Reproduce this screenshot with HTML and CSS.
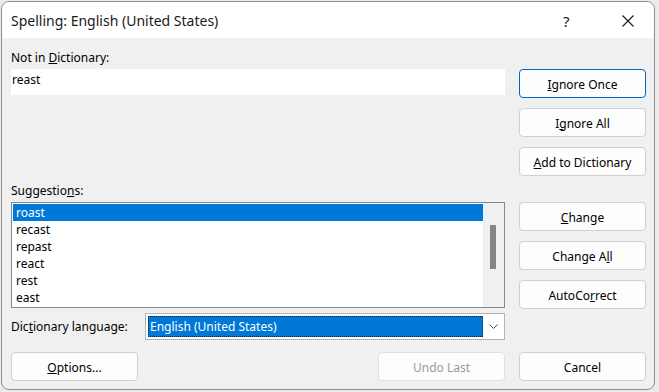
FILE: index.html
```html
<!DOCTYPE html>
<html>

<head>
  <meta charset="utf-8">
  <meta name="viewport" content="width=device-width">
  <title>Spelling: English (United States)</title>
  <link rel="stylesheet" href="styles.css">
</head>

<body>
  <div class="dialog">
    <div class="titlebar">
      <span class="title">Spelling: English (United States)</span>
      <span class="help">?</span>
      <span class="close">
        <svg width="12" height="12" viewBox="0 0 12 12">
          <path d="M0.5 0.5 L11.5 11.5 M11.5 0.5 L0.5 11.5" stroke="#1a1a1a" stroke-width="1.1" fill="none"/>
        </svg>
      </span>
    </div>

    <div class="client">
      <div class="main">
        <div class="left">
          <div class="label first">Not in <u>D</u>ictionary:</div>
          <div class="textbox">reast</div>

          <div class="label sugg">Suggestio<u>n</u>s:</div>
          <div class="listbox">
            <ul class="items">
              <li class="selected">roast</li>
              <li>recast</li>
              <li>repast</li>
              <li>react</li>
              <li>rest</li>
              <li>east</li>
            </ul>
            <div class="scrollbar"><div class="thumb"></div></div>
          </div>

          <div class="langrow">
            <span class="label">Dic<u>t</u>ionary language:</span>
            <div class="combo">
              <div class="combo-value">English (United States)</div>
              <div class="combo-arrow">
                <svg width="9" height="5" viewBox="0 0 9 5">
                  <path d="M0.5 0.5 L4.5 4.5 L8.5 0.5" stroke="#505050" stroke-width="1" fill="none"/>
                </svg>
              </div>
            </div>
          </div>
        </div>

        <div class="right">
          <button class="btn default"><u>I</u>gnore Once</button>
          <button class="btn">I<u>g</u>nore All</button>
          <button class="btn"><u>A</u>dd to Dictionary</button>
          <button class="btn group"><u>C</u>hange</button>
          <button class="btn">Change A<u>l</u>l</button>
          <button class="btn">AutoCo<u>r</u>rect</button>
        </div>
      </div>

      <div class="footer">
        <button class="btn"><u>O</u>ptions...</button>
        <button class="btn disabled undo">Undo Last</button>
        <button class="btn">Cancel</button>
      </div>
    </div>
  </div>
</body>

</html>
```

FILE: styles.css
```css
html {
  height: 100%;
  width: 100%;
}

body {
  margin: 0;
  background-color: #ebebeb;
  font-family: "Segoe UI", "Noto Sans", sans-serif;
  font-size: 12px;
  color: #000;
}

.dialog {
  margin: 1px 0 0 1px;
  width: 652px;
  height: 387px;
  border: 1px solid #8e8e8e;
  border-radius: 8px;
  background-color: #f0f0f0;
  overflow: hidden;
  display: flex;
  flex-direction: column;
}

.titlebar {
  height: 36px;
  background-color: #fff;
  display: flex;
  align-items: center;
  flex-shrink: 0;
}

.title {
  font-size: 14px;
  margin-left: 9px;
  margin-top: 1px;
  color: #1a1a1a;
  flex: 1;
}

.help {
  font-size: 15px;
  width: 14px;
  margin-right: 45px;
  margin-top: 1px;
  color: #1a1a1a;
}

.close {
  display: flex;
  margin-right: 20px;
  margin-top: 1px;
}

.client {
  padding: 0 8px 0 9px;
}

.main {
  display: flex;
  gap: 14px;
}

.left {
  width: 494px;
  display: flex;
  flex-direction: column;
}

.label {
  line-height: 16px;
}

.label.first {
  margin-top: 12px;
}

.label.sugg {
  margin-top: 88px;
}

.textbox {
  margin-top: 3px;
  height: 26px;
  line-height: 22px;
  padding-left: 1px;
  background-color: #fff;
  box-sizing: border-box;
}

.listbox {
  margin-top: 3px;
  height: 106px;
  border: 1px solid #828790;
  box-sizing: border-box;
  background-color: #fff;
  display: flex;
}

.items {
  list-style: none;
  margin: 0;
  padding: 1px 0 0 1px;
  flex: 1;
}

.items li {
  height: 17px;
  line-height: 18px;
  padding-left: 3px;
}

.items li.selected {
  background-color: #0078d7;
  color: #fff;
}

.scrollbar {
  width: 21px;
  background-color: #f0f0f0;
  position: relative;
}

.thumb {
  position: absolute;
  left: 7px;
  top: 22px;
  width: 6px;
  height: 44px;
  background-color: #858585;
}

.langrow {
  margin-top: 5px;
  display: flex;
  align-items: center;
  justify-content: space-between;
}

.combo {
  width: 360px;
  height: 27px;
  box-sizing: border-box;
  border: 1px solid #b4b4b4;
  background-color: #fff;
  display: flex;
  align-items: center;
  padding: 2px 0 2px 2px;
}

.combo-value {
  flex: 1;
  height: 21px;
  line-height: 21px;
  padding-left: 2px;
  background-color: #0078d7;
  color: #fff;
  outline: 1px dotted #1e1e1e;
  outline-offset: -1px;
}

.combo-arrow {
  width: 21px;
  display: flex;
  justify-content: center;
  align-items: center;
}

.right {
  width: 127px;
  display: flex;
  flex-direction: column;
  gap: 10px;
  padding-top: 31px;
}

.btn {
  height: 29px;
  width: 127px;
  box-sizing: border-box;
  border: 1px solid #d0d0d0;
  border-radius: 4px;
  background-color: #fdfdfd;
  font-family: inherit;
  font-size: 12px;
  color: #000;
  padding: 1px 0 0;
}

.btn.default {
  border-color: #0067c0;
}

.btn.group {
  margin-top: 16px;
}

.btn.disabled {
  color: #9a9a9a;
  border-color: #e0e0e0;
}

.footer {
  margin-top: 12px;
  display: flex;
}

.footer .undo {
  margin-left: auto;
  margin-right: 14px;
}
```
